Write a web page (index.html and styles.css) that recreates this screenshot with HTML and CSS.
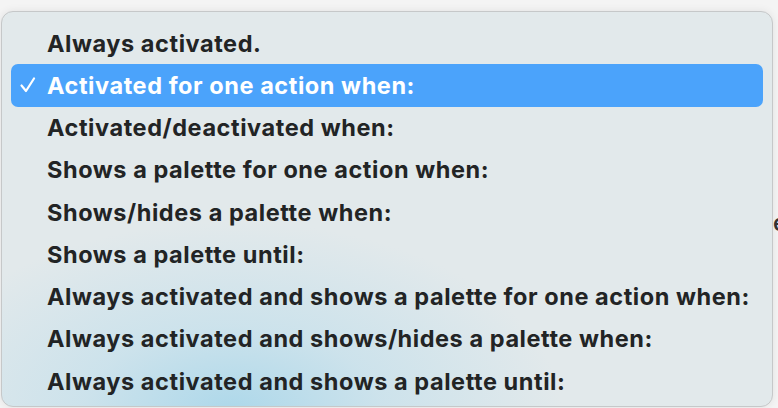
FILE: index.html
```html
<!DOCTYPE html>
<html>
<head>
<meta charset="utf-8">
<link rel="stylesheet" href="styles.css">
</head>
<body>
<div class="stage">
  <div class="menu">
    <div class="item">Always activated.</div>
    <div class="item selected"><svg class="check" width="16" height="16" viewBox="0 0 16 16"><polyline points="1.5,8.5 6,14 14,1.5" fill="none" stroke="#ffffff" stroke-width="2.2" stroke-linecap="round" stroke-linejoin="round"/></svg>Activated for one action when:</div>
    <div class="item">Activated/deactivated when:</div>
    <div class="item">Shows a palette for one action when:</div>
    <div class="item">Shows/hides a palette when:</div>
    <div class="item">Shows a palette until:</div>
    <div class="item">Always activated and shows a palette for one action when:</div>
    <div class="item">Always activated and shows/hides a palette when:</div>
    <div class="item">Always activated and shows a palette until:</div>
  </div>
  <div class="behind">e</div>
</div>
</body>
</html>
```
FILE: styles.css
```css
html, body {
  margin: 0;
  padding: 0;
  width: 778px;
  height: 408px;
  overflow: hidden;
  background: #f4f4f4;
  font-family: Inter, "Noto Sans", sans-serif;
}
.stage {
  display: flex;
  align-items: flex-start;
  padding: 11px 0 0 1px;
}
.menu {
  flex: 0 0 auto;
  box-sizing: border-box;
  width: 772px;
  height: 396px;
  border: 1px solid #c6c8c9;
  border-radius: 12px;
  padding: 10px 0 0 0;
  background:
    radial-gradient(ellipse 330px 190px at 230px 400px, rgba(170, 215, 234, 0.95), rgba(190, 222, 236, 0.6) 45%, rgba(226, 233, 235, 0) 100%),
    #e2e9eb;
  box-shadow: 0 0 8px rgba(0, 0, 0, 0.08);
}
.item {
  position: relative;
  height: 42.25px;
  margin: 0 9px;
  padding-left: 36px;
  display: flex;
  align-items: center;
  font-size: 23.5px;
  letter-spacing: 0.56px;
  font-weight: 700;
  color: #222425;
  border-radius: 7px;
}
.selected {
  background: #4ba3fb;
  color: #ffffff;
}
.check {
  position: absolute;
  left: 9px;
  top: 13px;
}
.behind {
  font-size: 23px;
  font-weight: 600;
  color: #333;
  margin-top: 198px;
  margin-left: 0;
}
```
